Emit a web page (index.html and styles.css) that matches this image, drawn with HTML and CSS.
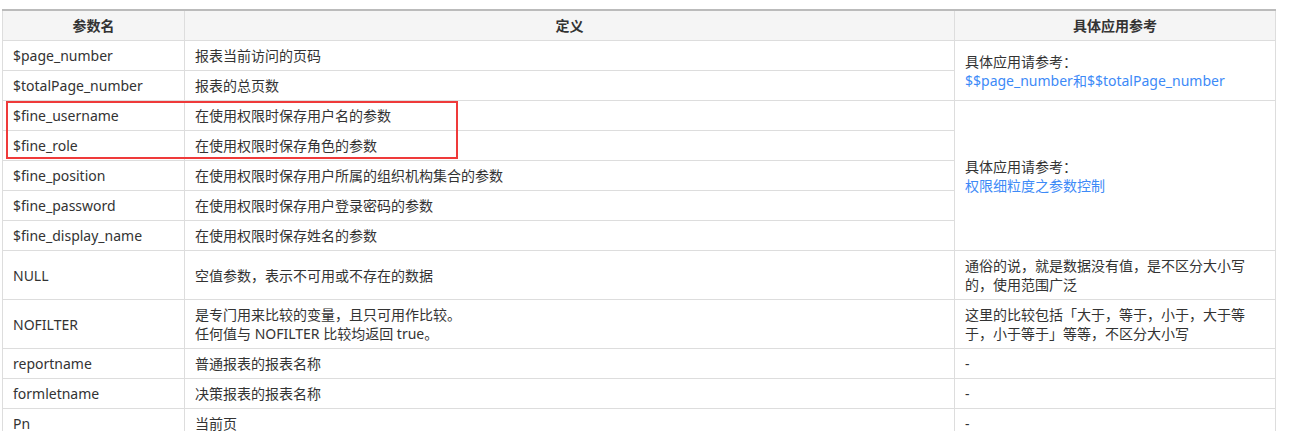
FILE: index.html
```html
<!DOCTYPE html>
<html lang="zh-CN">
<head>
<meta charset="utf-8">
<title>参数</title>
<link rel="stylesheet" href="styles.css">
</head>
<body>
<div class="wrap">
  <table class="params">
    <colgroup>
      <col class="c1"><col class="c2"><col class="c3">
    </colgroup>
    <thead>
      <tr><th>参数名</th><th>定义</th><th>具体应用参考</th></tr>
    </thead>
    <tbody>
      <tr><td>$page_number</td><td>报表当前访问的页码</td><td rowspan="2">具体应用请参考：<br><a class="link" href="#">$$page_number和$$totalPage_number</a></td></tr>
      <tr><td>$totalPage_number</td><td>报表的总页数</td></tr>
      <tr><td>$fine_username</td><td>在使用权限时保存用户名的参数</td><td rowspan="5">具体应用请参考：<br><a class="link" href="#">权限细粒度之参数控制</a></td></tr>
      <tr><td>$fine_role</td><td>在使用权限时保存角色的参数</td></tr>
      <tr><td>$fine_position</td><td>在使用权限时保存用户所属的组织机构集合的参数</td></tr>
      <tr><td>$fine_password</td><td>在使用权限时保存用户登录密码的参数</td></tr>
      <tr><td>$fine_display_name</td><td>在使用权限时保存姓名的参数</td></tr>
      <tr><td>NULL</td><td>空值参数，表示不可用或不存在的数据</td><td>通俗的说，就是数据没有值，是不区分大小写<br>的，使用范围广泛</td></tr>
      <tr><td>NOFILTER</td><td>是专门用来比较的变量，且只可用作比较。<br>任何值与 NOFILTER 比较均返回 true。</td><td>这里的比较包括「大于，等于，小于，大于等<br>于，小于等于」等等，不区分大小写</td></tr>
      <tr><td>reportname</td><td>普通报表的报表名称</td><td>-</td></tr>
      <tr><td>formletname</td><td>决策报表的报表名称</td><td>-</td></tr>
      <tr><td>Pn</td><td>当前页</td><td>-</td></tr>
    </tbody>
  </table>
  <div class="highlight"></div>
</div>
</body>
</html>
```
FILE: styles.css
```css
html, body {
  margin: 0;
  padding: 0;
  background: #fff;
}
body {
  font-family: "Noto Sans", "Noto Sans CJK SC", sans-serif;
  font-size: 14px;
  color: #333;
}
.wrap {
  position: relative;
  padding: 9px 0 0 2px;
}
.params {
  border-collapse: collapse;
  width: 1273px;
  table-layout: fixed;
  border-top: 2px solid #bbb;
}
.c1 { width: 182px; }
.c2 { width: 770px; }
.c3 { width: 321px; }
.params th,
.params td {
  border: 1px solid #ddd;
  padding: 5px 10px;
  line-height: 19px;
  vertical-align: middle;
  text-align: left;
  font-weight: normal;
}
.params thead th {
  background: #f5f5f5;
  font-weight: bold;
  text-align: center;
  border-top: 2px solid #bbb;
}
.link {
  color: #3d8af7;
  text-decoration: none;
}
.highlight {
  position: absolute;
  left: 6px;
  top: 101px;
  width: 448px;
  height: 54px;
  border: 2px solid #ef3a3a;
}
```
